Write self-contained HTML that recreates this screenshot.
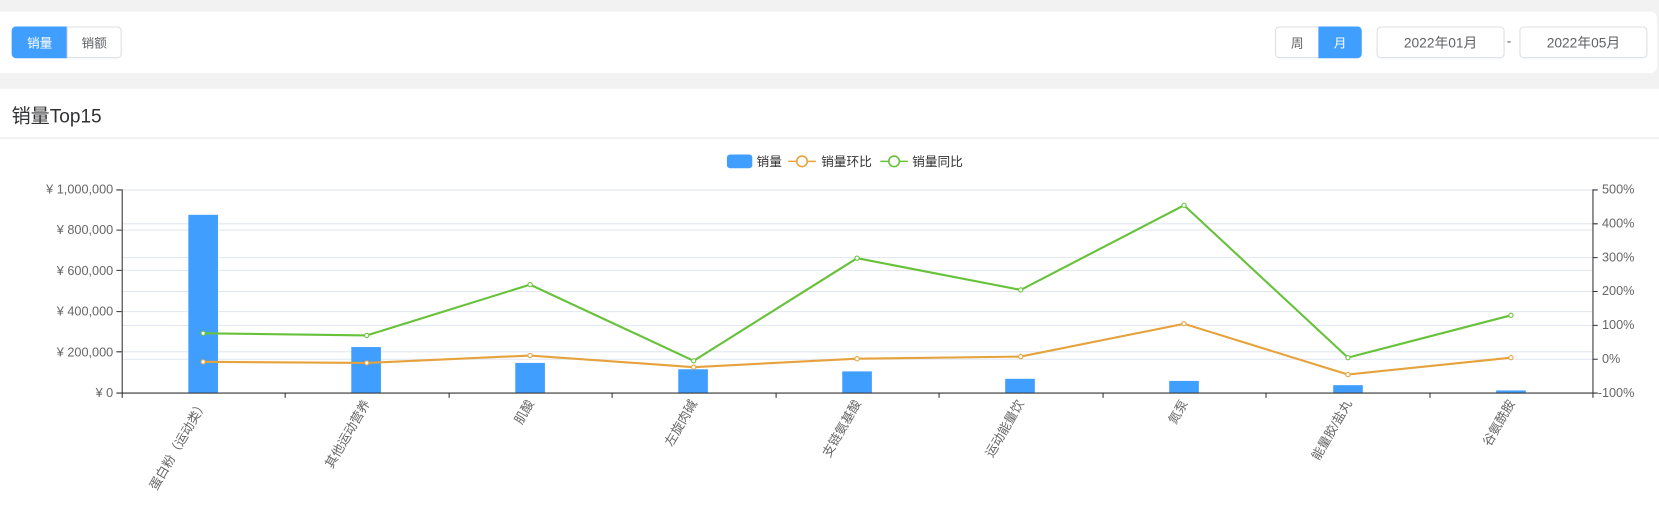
<!DOCTYPE html><html><head><meta charset="utf-8"><style>
html,body{margin:0;width:1659px;height:496px;overflow:hidden;background:#f2f2f2}
#w{position:absolute;left:0;top:0;width:1568px;height:469px;transform:scale(1.0581);transform-origin:0 0;font-family:"Liberation Sans","Noto Sans CJK SC",sans-serif}
.top{position:absolute;left:0;top:11px;width:1566px;height:58px;background:#fff;border-radius:0 6px 6px 0}
.btn{position:absolute;height:30px;line-height:30px;text-align:center;font-size:12px;border:1px solid #dcdfe6;color:#606266;box-sizing:border-box;background:#fff}
.on{background:#409eff;color:#fff;border-color:#409eff}
.card{position:absolute;left:0;top:84px;width:1568px;height:400px;background:#fff}
</style></head><body><div id="w">
<div class="top">
<div class="btn on" style="left:11px;top:14px;width:53px;border-radius:4px 0 0 4px">销量</div>
<div class="btn" style="left:63px;top:14px;width:52px;border-radius:0 4px 4px 0">销额</div>
<div class="btn" style="left:1205px;top:14px;width:42px;border-radius:4px 0 0 4px">周</div>
<div class="btn on" style="left:1246px;top:14px;width:41px;border-radius:0 4px 4px 0">月</div>
<div class="btn" style="left:1301px;top:14px;width:121px;border-radius:4px;font-size:13px">2022年01月</div>
<div style="position:absolute;left:1424px;top:20px;font-size:13px;color:#606266">-</div>
<div class="btn" style="left:1436px;top:14px;width:121px;border-radius:4px;font-size:13px">2022年05月</div>
</div>
<div class="card">
<div style="position:absolute;left:11px;top:12px;font-size:18px;color:#303133">销量Top15</div>
<div style="position:absolute;left:0;top:46px;width:1568px;height:1px;background:#e8e8e8"></div>
</div>
<svg style="position:absolute;left:0;top:0" width="1568" height="469" font-family="Liberation Sans,Noto Sans CJK SC,sans-serif" font-size="12" fill="#666">
<g stroke="#e0e6f1" stroke-width="1">
<line x1="115" x2="1505" y1="179.5" y2="179.5"/><line x1="115" x2="1505" y1="217.5" y2="217.5"/><line x1="115" x2="1505" y1="255.5" y2="255.5"/><line x1="115" x2="1505" y1="294.5" y2="294.5"/><line x1="115" x2="1505" y1="332.5" y2="332.5"/>
<line x1="115" x2="1505" y1="211.5" y2="211.5"/><line x1="115" x2="1505" y1="243.5" y2="243.5"/><line x1="115" x2="1505" y1="275.5" y2="275.5"/><line x1="115" x2="1505" y1="307.5" y2="307.5"/><line x1="115" x2="1505" y1="339.5" y2="339.5"/>
</g>
<g stroke="#333"><line x1="115.5" x2="115.5" y1="179" y2="371"/><line x1="1505.5" x2="1505.5" y1="179" y2="371"/><line x1="115" x2="1505" y1="371.5" y2="371.5"/>
<path d="M110 179.5h5M110 217.5h5M110 255.5h5M110 294.5h5M110 332.5h5M110 371.5h5M1505 179.5h5M1505 211.5h5M1505 243.5h5M1505 275.5h5M1505 307.5h5M1505 339.5h5M1505 371.5h5M115.5 371v5M269.5 371v5M424.5 371v5M578.5 371v5M733.5 371v5M887.5 371v5M1042.5 371v5M1196.5 371v5M1351.5 371v5M1505.5 371v5"/></g>
<g text-anchor="end"><text x="107" y="183">¥ 1,000,000</text><text x="107" y="221">¥ 800,000</text><text x="107" y="260">¥ 600,000</text><text x="107" y="298">¥ 400,000</text><text x="107" y="337">¥ 200,000</text><text x="107" y="375">¥ 0</text></g>
<g><text x="1514" y="183">500%</text><text x="1514" y="215">400%</text><text x="1514" y="247">300%</text><text x="1514" y="279">200%</text><text x="1514" y="311">100%</text><text x="1514" y="343">0%</text><text x="1510" y="375">-100%</text></g>
<g fill="#409eff"><rect x="178" y="203" width="28" height="168"/><rect x="332" y="328" width="28" height="43"/><rect x="487" y="343" width="28" height="28"/><rect x="641" y="349" width="28" height="22"/><rect x="796" y="351" width="28" height="20"/><rect x="950" y="358" width="28" height="13"/><rect x="1105" y="360" width="28" height="11"/><rect x="1260" y="364" width="28" height="7"/><rect x="1414" y="369" width="28" height="2"/></g>
<polyline fill="none" stroke="#e6a23c" stroke-width="2" points="192,342 346.6,343 501,336 655.6,347 810,339 964.7,337 1119,306 1273.9,354 1428,338"/>
<polyline fill="none" stroke="#67c23a" stroke-width="2" points="192,315 346.6,317 501,269 655.6,341 810,244 964.7,274 1119,194 1273.9,338 1428,298"/>
<g fill="#fff" stroke="#e6a23c"><circle cx="192" cy="342" r="2"/><circle cx="346.6" cy="343" r="2"/><circle cx="501" cy="336" r="2"/><circle cx="655.6" cy="347" r="2"/><circle cx="810" cy="339" r="2"/><circle cx="964.7" cy="337" r="2"/><circle cx="1119" cy="306" r="2"/><circle cx="1273.9" cy="354" r="2"/><circle cx="1428" cy="338" r="2"/></g>
<g fill="#fff" stroke="#67c23a"><circle cx="192" cy="315" r="2"/><circle cx="346.6" cy="317" r="2"/><circle cx="501" cy="269" r="2"/><circle cx="655.6" cy="341" r="2"/><circle cx="810" cy="244" r="2"/><circle cx="964.7" cy="274" r="2"/><circle cx="1119" cy="194" r="2"/><circle cx="1273.9" cy="338" r="2"/><circle cx="1428" cy="298" r="2"/></g>
<g text-anchor="end" fill="#666">
<text transform="translate(196,381) rotate(-60)">蛋白粉（运动类）</text>
<text transform="translate(350,381) rotate(-60)">其他运动营养</text>
<text transform="translate(505,381) rotate(-60)">肌酸</text>
<text transform="translate(659,381) rotate(-60)">左旋肉碱</text>
<text transform="translate(814,381) rotate(-60)">支链氨基酸</text>
<text transform="translate(968,381) rotate(-60)">运动能量饮</text>
<text transform="translate(1123,381) rotate(-60)">氮泵</text>
<text transform="translate(1278,381) rotate(-60)">能量胶/盐丸</text>
<text transform="translate(1432,381) rotate(-60)">谷氨酰胺</text>
</g>
<rect x="687" y="146" width="24" height="13" rx="3" fill="#409eff"/><text x="715" y="157" fill="#333">销量</text>
<line x1="745" x2="771" y1="152.5" y2="152.5" stroke="#e6a23c" stroke-width="1.5"/><circle cx="758" cy="152.5" r="5" fill="#fff" stroke="#e6a23c" stroke-width="1.5"/><text x="776" y="157" fill="#333">销量环比</text>
<line x1="832" x2="858" y1="152.5" y2="152.5" stroke="#67c23a" stroke-width="1.5"/><circle cx="845" cy="152.5" r="5" fill="#fff" stroke="#67c23a" stroke-width="1.5"/><text x="862" y="157" fill="#333">销量同比</text>
</svg>
</div></body></html>
